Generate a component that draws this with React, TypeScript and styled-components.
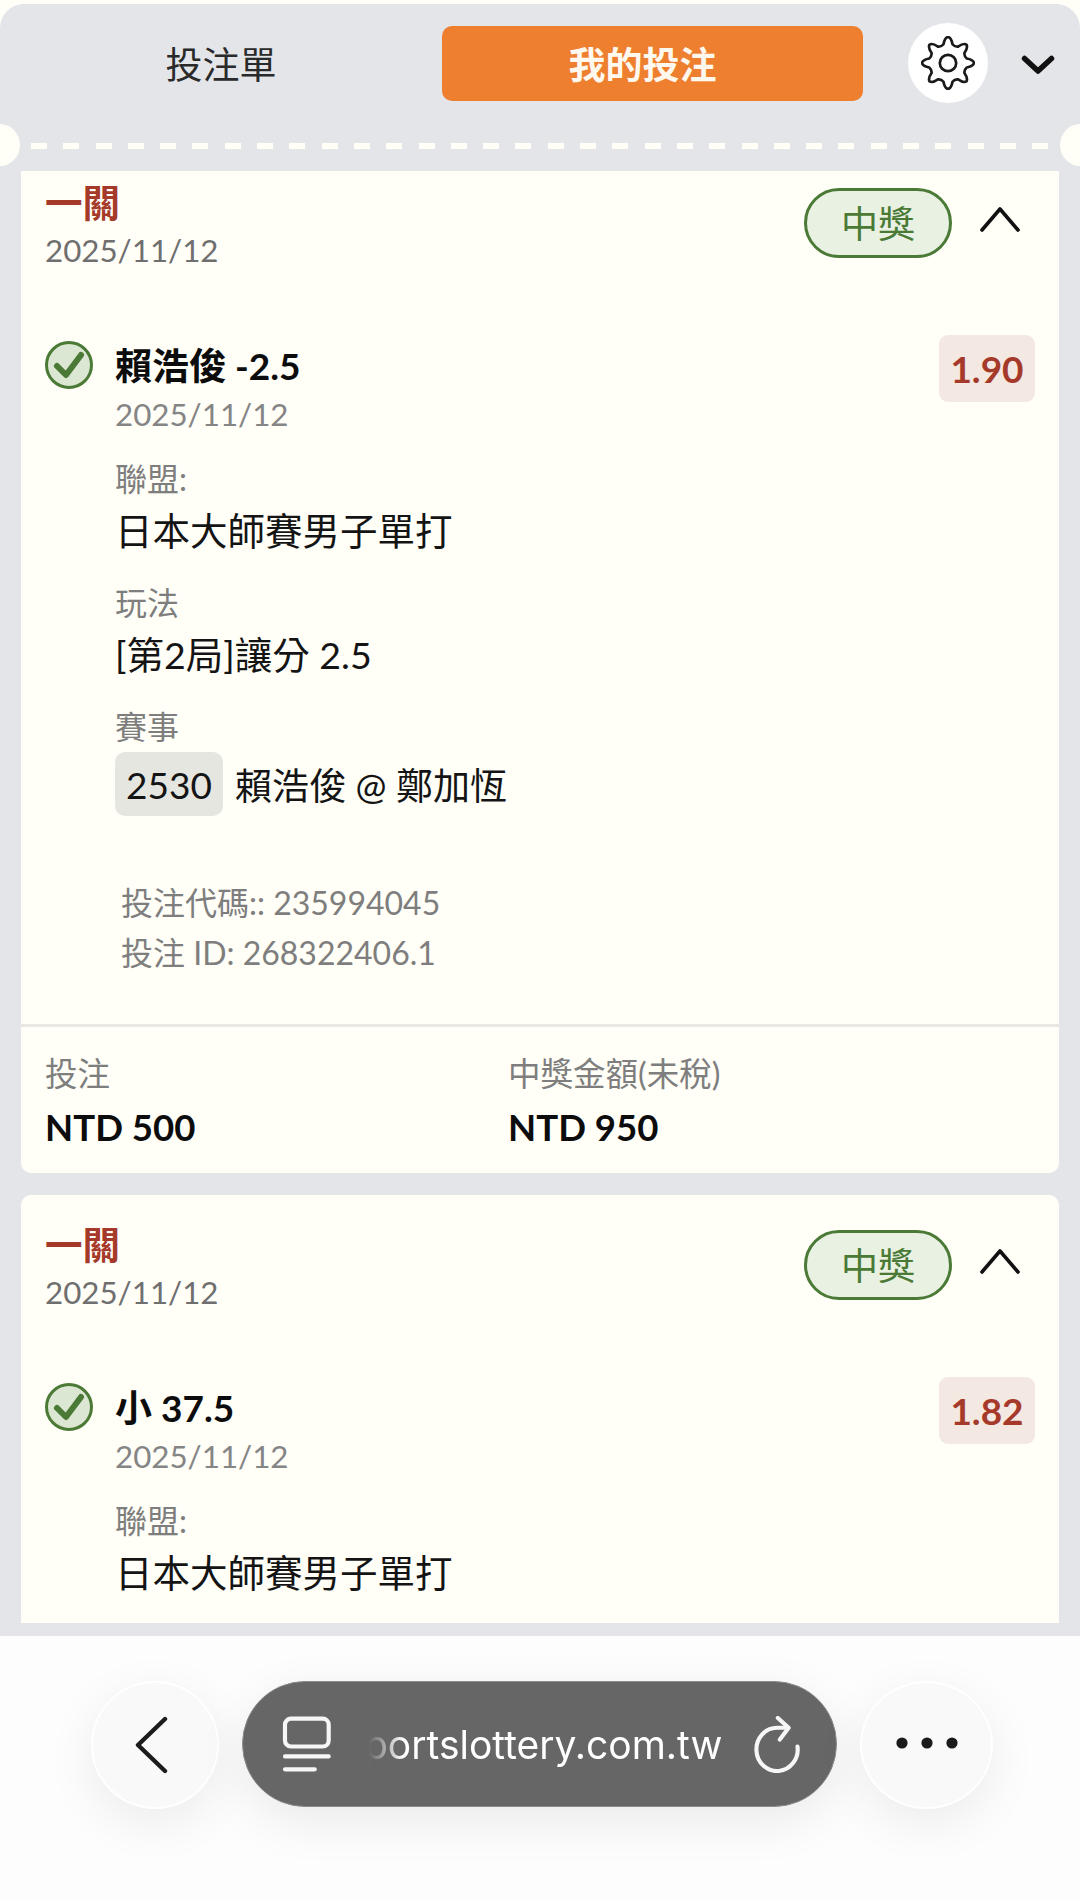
import React from 'react';
import styled, { createGlobalStyle } from 'styled-components';

const FONT = `Lato, "Noto Sans CJK TC", sans-serif`;

const Global = createGlobalStyle`
  html, body { margin: 0; padding: 0; background: #fdfdfd; }
  * { box-sizing: border-box; }
  body { font-family: ${FONT}; }
`;

const Page = styled.div`
  width: 1080px;
  height: 1900px;
  display: flex;
  flex-direction: column;
  overflow: hidden;
  background: #fdfdfd;
`;

const Panel = styled.div`
  height: 1636px;
  display: flex;
  flex-direction: column;
  background: #e3e5e8;
  border-top: 4px solid #fffef7;
  position: relative;
`;

const TopCorners = styled.div`
  height: 167px;
  flex: none;
  display: flex;
  flex-direction: column;
  border-radius: 24px 24px 0 0;
  background: #e3e5e8;
  box-shadow: 0 -24px 0 24px #fffef7;
  position: relative;
  clip-path: inset(-4px 0 0 0);
`;

const TabBar = styled.div`
  display: flex;
  align-items: center;
  padding: 0 0 0 40px;
  height: 118px;
`;

const PlainTab = styled.div`
  width: 362px;
  height: 75px;
  display: flex;
  align-items: center;
  justify-content: center;
  font-size: 37px;
  color: #2a2a2a;
`;

const ActiveTab = styled.div`
  width: 421px;
  height: 75px;
  margin-left: 40px;
  padding-right: 20px;
  border-radius: 10px;
  background: #ee7f2f;
  color: #fff8ee;
  font-size: 37px;
  font-weight: 700;
  display: flex;
  align-items: center;
  justify-content: center;
`;

const GearButton = styled.div`
  width: 80px;
  height: 80px;
  margin-left: 45px;
  border-radius: 50%;
  background: #fff;
  display: flex;
  align-items: center;
  justify-content: center;
`;

const ChevronWrap = styled.div`
  margin-left: 33px;
  display: flex;
  margin-top: 4px;
`;

const Dashes = styled.div`
  height: 6px;
  margin: 21px 30px 0 31px;
  background: repeating-linear-gradient(90deg, #fffef7 0 16px, transparent 16px 32.3px);
`;

const Notch = styled.div<{ $side: 'left' | 'right' }>`
  position: absolute;
  top: 120px;
  ${p => p.$side}: -20px;
  width: 40px;
  height: 42px;
  border-radius: 50%;
  background: #fffef7;
`;

const List = styled.div`
  flex: 1;
  min-height: 0;
  margin: 0 21px 13px;
  display: flex;
  flex-direction: column;
  gap: 22px;
  overflow: hidden;
`;

const Card = styled.section<{ $first?: boolean; $last?: boolean }>`
  flex: ${p => (p.$last ? '1 0 auto' : 'none')};
  background: #fffef7;
  border-radius: ${p => (p.$last ? '10px 10px 0 0' : '10px')};
  margin-top: ${p => (p.$first ? '-18px' : '0')};
`;

const CardHead = styled.header`
  display: flex;
  justify-content: space-between;
  align-items: flex-start;
  padding: 26px 0 0 24px;
  height: 189px;
`;

const ParlayTitle = styled.div`
  font-size: 37.5px;
  line-height: 48px;
  font-weight: 700;
  color: #a63a2a;
`;

const HeadDate = styled.div`
  font-size: 31.3px;
  line-height: 46px;
  color: #6f6f6f;
`;

const HeadRight = styled.div`
  display: flex;
  align-items: center;
  margin-top: 9px;
`;

const StatusPill = styled.div`
  width: 148px;
  height: 70px;
  padding-bottom: 3px;
  border: 3px solid #4a7a35;
  border-radius: 35px;
  background: #e9f1e2;
  color: #4a7a35;
  font-size: 37px;
  display: flex;
  align-items: center;
  justify-content: center;
`;

const Collapse = styled.div`
  margin: 0 39px 8px 28px;
  display: flex;
`;

const Selection = styled.div`
  display: flex;
  padding: 0 24px;
`;

const CheckWrap = styled.div`
  width: 70px;
  flex: none;
  display: flex;
  margin-top: -2px;
  margin-left: -1px;
  margin-right: 1px;
`;

const SelectionBody = styled.div`
  flex: 1;
`;

const Name = styled.div`
  font-size: 37px;
  line-height: 48px;
  font-weight: 700;
  color: #0c0c0c;
`;

const SelDate = styled.div`
  font-size: 31.3px;
  line-height: 48px;
  color: #858585;
`;

const Odds = styled.div`
  align-self: flex-start;
  width: 96px;
  height: 67px;
  margin-top: -7px;
  border-radius: 9px;
  background: #f4e8e2;
  color: #a63a2a;
  font-size: 37px;
  font-weight: 700;
  display: flex;
  align-items: center;
  justify-content: center;
`;

const Field = styled.div`
  margin-top: 26px;
  &:nth-child(3) { margin-top: 20px; }
`;

const FieldLabel = styled.div`
  font-size: 32px;
  line-height: 42px;
  color: #7e7e7e;
`;

const FieldValue = styled.div`
  font-size: 37.5px;
  line-height: 50px;
  margin-top: 6px;
  color: #141414;
`;

const MatchRow = styled.div`
  display: flex;
  align-items: center;
  gap: 12px;
  margin-top: 4px;
  font-size: 37px;
  color: #141414;
`;

const MatchCode = styled.span`
  width: 108px;
  height: 64px;
  border-radius: 10px;
  background: #e6e6e0;
  display: flex;
  align-items: center;
  justify-content: center;
`;

const Meta = styled.div`
  margin: 62px 0 0 6px;
  font-size: 32px;
  line-height: 50px;
  color: #7e7e7e;
`;

const Totals = styled.footer`
  margin-top: 46px;
  border-top: 3px solid #e9e9e4;
  display: grid;
  grid-template-columns: 463px 1fr;
  padding: 24px 24px 20px;
`;

const TotalLabel = styled.div`
  font-size: 32.5px;
  line-height: 46px;
  color: #7e7e7e;
`;

const TotalValue = styled.div`
  font-size: 36.6px;
  line-height: 52px;
  margin-top: 4px;
  font-weight: 700;
  color: #0c0c0c;
`;

const BottomBar = styled.div`
  flex: 1;
  display: flex;
  align-items: flex-start;
  padding: 45px 0 0 91px;
  gap: 23px;
  background: #fdfdfd;
`;

const RoundButton = styled.div<{ $w: number; $shift?: string }>`
  width: ${p => p.$w}px;
  height: 128px;
  flex: none;
  padding: ${p => p.$shift ?? '0'};
  border-radius: 50%;
  background: #f9f9f9;
  border: 2px solid #ffffff;
  box-shadow: 0 14px 50px rgba(0, 0, 0, 0.07);
  display: flex;
  align-items: center;
  justify-content: center;
`;

const UrlPill = styled.div`
  width: 595px;
  height: 126px;
  flex: none;
  border-radius: 63px;
  background: #666666;
  border: 1px solid #8c8c8c;
  box-shadow: 0 14px 50px rgba(0, 0, 0, 0.08);
  display: flex;
  align-items: center;
  padding: 0 34px 0 39px;
  color: #fff;
`;

const UrlText = styled.div`
  width: 362px;
  margin: 2px 32px 0 31px;
  overflow: hidden;
  display: flex;
  justify-content: flex-end;
  white-space: nowrap;
  font-family: Inter, sans-serif;
  font-size: 39px;
  line-height: 50px;
  -webkit-mask-image: linear-gradient(90deg, transparent 0, transparent 6px, #000 40px);
  mask-image: linear-gradient(90deg, transparent 0, transparent 6px, #000 40px);
`;

function gearPath(cx: number, cy: number, rOut: number, rIn: number, teeth: number) {
  const step = (Math.PI * 2) / teeth;
  const pt = (r: number, a: number) => `${(cx + r * Math.cos(a)).toFixed(2)} ${(cy + r * Math.sin(a)).toFixed(2)}`;
  let d = '';
  for (let i = 0; i < teeth; i++) {
    const a = i * step - Math.PI / 2;
    const w = step * 0.15;
    const s = step * 0.3;
    d += `${i === 0 ? 'M' : 'L'}${pt(rIn, a - s)} Q${pt(rOut * 0.98, a - w * 1.1)} ${pt(rOut, a)} Q${pt(rOut * 0.98, a + w * 1.1)} ${pt(rIn, a + s)} Q${pt(rIn * 0.9, a + step / 2)} ${pt(rIn, a + step - s)} `;
  }
  return d + 'Z';
}

const Gear = () => (
  <svg width="54" height="54" viewBox="0 0 56 56" fill="none" stroke="#1a1a1a" strokeWidth="2.8" strokeLinejoin="round">
    <path d={gearPath(28, 28, 27, 20, 8)} />
    <circle cx="28" cy="28" r="8.5" />
  </svg>
);

const ChevronDown = () => (
  <svg width="34" height="20" viewBox="0 0 34 20" fill="none" stroke="#111" strokeWidth="5.5" strokeLinecap="round" strokeLinejoin="round">
    <path d="M3.5 3.5 17 16 30.5 3.5" />
  </svg>
);

const ChevronUp = () => (
  <svg width="40" height="26" viewBox="0 0 40 26" fill="none" stroke="#111" strokeWidth="3.6" strokeLinecap="round" strokeLinejoin="round">
    <path d="M2 24 20 3 38 24" />
  </svg>
);

const CheckIcon = () => (
  <svg width="50" height="50" viewBox="0 0 50 50">
    <circle cx="25" cy="25" r="22.5" fill="#dbe6d3" stroke="#4a7a35" strokeWidth="3" />
    <path d="M13 26 22 35 37 15" fill="none" stroke="#4a7a35" strokeWidth="6" strokeLinecap="round" strokeLinejoin="round" />
  </svg>
);

const BackIcon = () => (
  <svg width="34" height="58" viewBox="0 0 34 58" fill="none" stroke="#1c1c1c" strokeWidth="4.4" strokeLinecap="round" strokeLinejoin="round">
    <path d="M30 3 3 29 30 55" />
  </svg>
);

const MoreIcon = () => (
  <svg width="62" height="14" viewBox="0 0 62 14" fill="#1a1a1a">
    <circle cx="6" cy="7" r="5.6" />
    <circle cx="31" cy="7" r="5.6" />
    <circle cx="56" cy="7" r="5.6" />
  </svg>
);

const TabsIcon = () => (
  <svg width="50" height="56" viewBox="0 0 50 56" fill="none" stroke="#f6f6f6" strokeWidth="4.2" strokeLinecap="round">
    <rect x="3" y="2.5" width="44" height="28" rx="6" />
    <path d="M3 40.5H47M3 53.5H33" />
  </svg>
);

const ReloadIcon = () => (
  <svg width="48" height="57" viewBox="0 0 48 58" fill="none" stroke="#f6f6f6" strokeWidth="4.2" strokeLinecap="round" strokeLinejoin="round">
    <path d="M44 31A21 22 0 1 1 23 12H33" />
    <path d="M24 2 35 12 26 24" />
  </svg>
);

type Bet = {
  name: string;
  odds: string;
  fields: { label: string; value: string }[];
  match?: { code: string; teams: string };
  meta?: string[];
  totals?: { label: string; value: string }[];
};

const bets: Bet[] = [
  {
    name: '賴浩俊 -2.5',
    odds: '1.90',
    fields: [
      { label: '聯盟:', value: '日本大師賽男子單打' },
      { label: '玩法', value: '[第2局]讓分 2.5' },
    ],
    match: { code: '2530', teams: '賴浩俊 @ 鄭加恆' },
    meta: ['投注代碼:: 235994045', '投注 ID: 268322406.1'],
    totals: [
      { label: '投注', value: 'NTD 500' },
      { label: '中獎金額(未稅)', value: 'NTD 950' },
    ],
  },
  {
    name: '小 37.5',
    odds: '1.82',
    fields: [{ label: '聯盟:', value: '日本大師賽男子單打' }],
  },
];

export default function App() {
  return (
    <Page>
      <Global />
      <Panel>
        <TopCorners>
          <TabBar>
            <PlainTab>投注單</PlainTab>
            <ActiveTab>我的投注</ActiveTab>
            <GearButton><Gear /></GearButton>
            <ChevronWrap><ChevronDown /></ChevronWrap>
          </TabBar>
          <Dashes />
        </TopCorners>
        <Notch $side="left" />
        <Notch $side="right" />
        <List>
          {bets.map((b, i) => (
            <Card key={b.name} $first={i === 0} $last={i === bets.length - 1}>
              <CardHead>
                <div>
                  <ParlayTitle>一關</ParlayTitle>
                  <HeadDate>2025/11/12</HeadDate>
                </div>
                <HeadRight>
                  <StatusPill>中獎</StatusPill>
                  <Collapse><ChevronUp /></Collapse>
                </HeadRight>
              </CardHead>
              <Selection>
                <CheckWrap><CheckIcon /></CheckWrap>
                <SelectionBody>
                  <Name>{b.name}</Name>
                  <SelDate>2025/11/12</SelDate>
                  {b.fields.map(f => (
                    <Field key={f.label}>
                      <FieldLabel>{f.label}</FieldLabel>
                      <FieldValue>{f.value}</FieldValue>
                    </Field>
                  ))}
                  {b.match && (
                    <Field>
                      <FieldLabel>賽事</FieldLabel>
                      <MatchRow>
                        <MatchCode>{b.match.code}</MatchCode>
                        {b.match.teams}
                      </MatchRow>
                    </Field>
                  )}
                  {b.meta && <Meta>{b.meta.map(m => <div key={m}>{m}</div>)}</Meta>}
                </SelectionBody>
                <Odds>{b.odds}</Odds>
              </Selection>
              {b.totals && (
                <Totals>
                  {b.totals.map(t => (
                    <div key={t.label}>
                      <TotalLabel>{t.label}</TotalLabel>
                      <TotalValue>{t.value}</TotalValue>
                    </div>
                  ))}
                </Totals>
              )}
            </Card>
          ))}
        </List>
      </Panel>
      <BottomBar>
        <RoundButton $w={128} $shift="0 6px 0 0"><BackIcon /></RoundButton>
        <UrlPill>
          <TabsIcon />
          <UrlText>sportslottery.com.tw</UrlText>
          <ReloadIcon />
        </UrlPill>
        <RoundButton $w={133} $shift="0 0 5px 0"><MoreIcon /></RoundButton>
      </BottomBar>
    </Page>
  );
}
